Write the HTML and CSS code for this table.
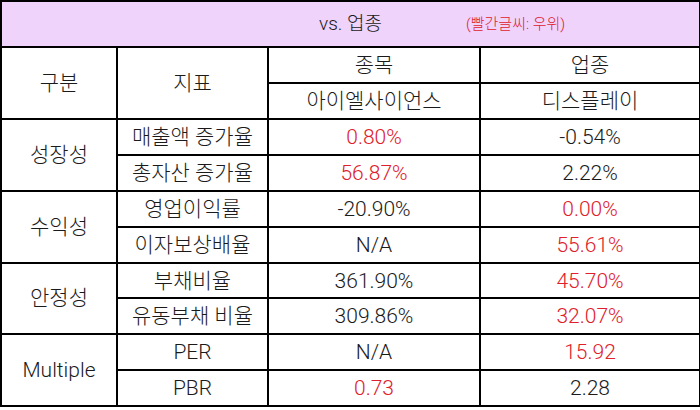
FILE: index.html
```html
<!DOCTYPE html>
<html lang="ko">
<head>
<meta charset="utf-8">
<link rel="stylesheet" href="styles.css">
</head>
<body>
<table class="cmp">
  <colgroup>
    <col class="c1"><col class="c2"><col class="c3"><col class="c4">
  </colgroup>
  <thead>
    <tr class="title-row">
      <th colspan="4">
        <div class="title">
          <span></span>
          <span class="title-text">vs. 업종</span>
          <span class="note">(빨간글씨: 우위)</span>
        </div>
      </th>
    </tr>
    <tr class="h1">
      <th rowspan="2">구분</th>
      <th rowspan="2">지표</th>
      <th>종목</th>
      <th>업종</th>
    </tr>
    <tr class="h2">
      <th>아이엘사이언스</th>
      <th>디스플레이</th>
    </tr>
  </thead>
  <tbody>
    <tr><td rowspan="2">성장성</td><td>매출액 증가율</td><td class="red">0.80%</td><td>-0.54%</td></tr>
    <tr><td>총자산 증가율</td><td class="red">56.87%</td><td>2.22%</td></tr>
    <tr><td rowspan="2">수익성</td><td>영업이익률</td><td>-20.90%</td><td class="red">0.00%</td></tr>
    <tr><td>이자보상배율</td><td>N/A</td><td class="red">55.61%</td></tr>
    <tr><td rowspan="2">안정성</td><td>부채비율</td><td>361.90%</td><td class="red">45.70%</td></tr>
    <tr><td>유동부채 비율</td><td>309.86%</td><td class="red">32.07%</td></tr>
    <tr><td rowspan="2">Multiple</td><td>PER</td><td>N/A</td><td class="red">15.92</td></tr>
    <tr><td>PBR</td><td class="red">0.73</td><td>2.28</td></tr>
  </tbody>
</table>
</body>
</html>
```
FILE: styles.css
```css
html, body {
  margin: 0;
  padding: 0;
  background: #ffffff;
}

body {
  font-family: Roboto, "Noto Sans CJK KR", sans-serif;
  font-weight: 300;
  color: #1a1a1a;
}

.cmp {
  border-collapse: collapse;
  table-layout: fixed;
  width: 699px;
  font-size: 21px;
}

.c1 { width: 116px; }
.c2 { width: 151px; }
.c3 { width: 212px; }
.c4 { width: 220px; }

.cmp th,
.cmp td {
  border: 2px solid #000;
  padding: 0;
  text-align: center;
  vertical-align: middle;
  font-weight: 300;
  line-height: 20px;
  white-space: nowrap;
}

.title-row th {
  background: #efd3fb;
  height: 44px;
}

.title {
  display: grid;
  grid-template-columns: 1fr auto 1fr;
  align-items: center;
}

.title-text {
  font-size: 19px;
}

.note {
  justify-self: start;
  padding-left: 84px;
  font-size: 15px;
  color: #e0202a;
}

.h1 th { height: 34px; }
.h2 th { height: 34px; }

.cmp tbody td { height: 33.9px; }

.red { color: #e0202a; }
```
